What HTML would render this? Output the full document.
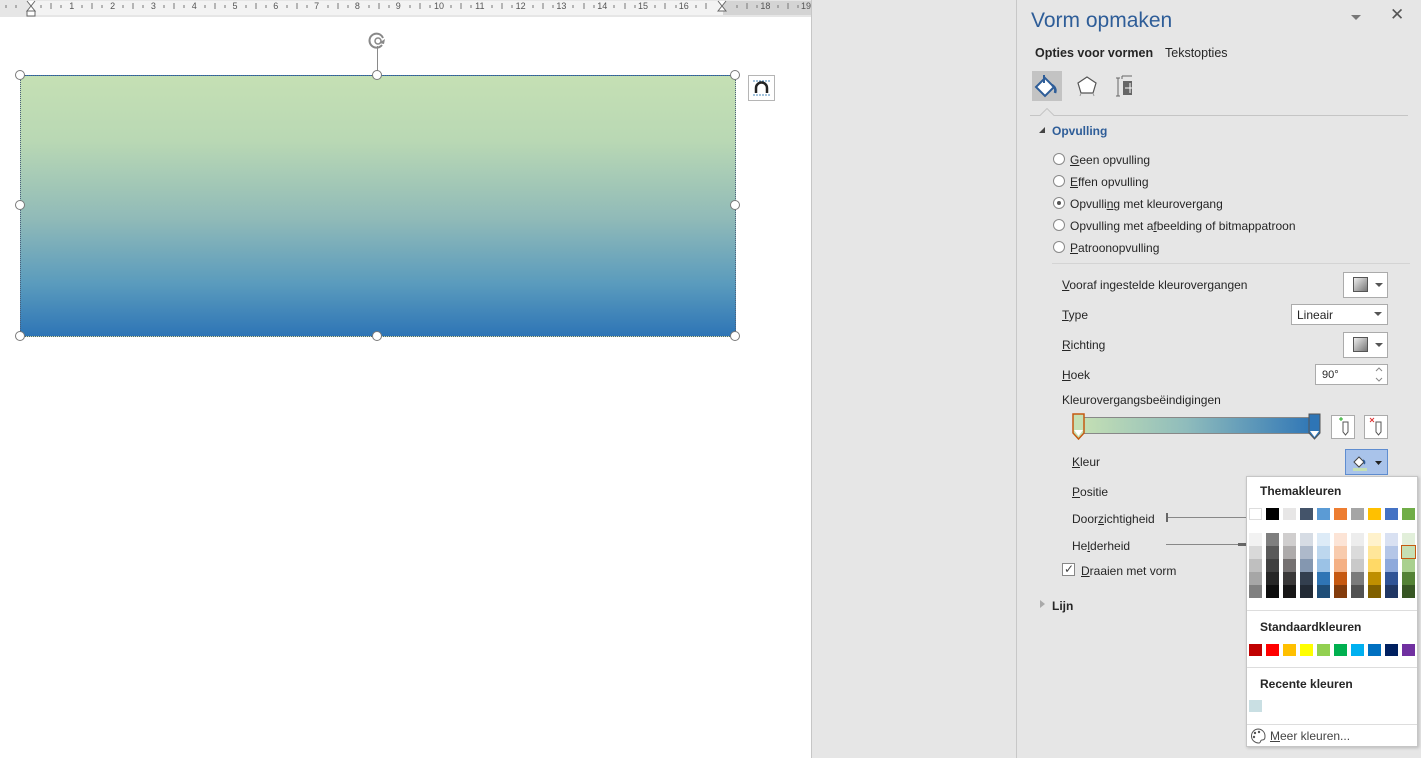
<!DOCTYPE html>
<html><head><meta charset="utf-8"><style>
*{margin:0;padding:0;box-sizing:border-box}
body{width:1421px;height:758px;overflow:hidden;background:#e6e6e6;font-family:"Liberation Sans",sans-serif;font-size:12px;color:#262626;position:relative}
.a{position:absolute}
.t{position:absolute;white-space:nowrap;line-height:14px}
u{text-decoration:underline}
.h{position:absolute;width:10px;height:10px;border:1px solid #7a7a7a;border-radius:50%;background:#fff}
.rad{position:absolute;width:12px;height:12px;border:1px solid #8a8a8a;border-radius:50%;background:#fff}
.btn{position:absolute;background:#fff;border:1px solid #ababab}
.arr{position:absolute;width:0;height:0;border-left:4px solid transparent;border-right:4px solid transparent;border-top:4px solid #555}
.sw{position:absolute;width:13px;height:12px}
.col{position:absolute;width:13px;top:533px}
.col div{height:13px}
.b{font-weight:bold}
</style></head><body>
<div class="a" style="left:0;top:0;width:811px;height:758px;background:#fff"></div>
<div class="a" style="left:811px;top:0;width:1px;height:758px;background:#c6c6c6"></div>
<div class="a" style="left:1016px;top:0;width:1px;height:758px;background:#c8c8c8"></div>
<div class="a" style="left:0;top:0;width:811px;height:17px;background:#e6e6e6"></div>
<div class="a" style="left:31px;top:1px;width:692px;height:14px;background:#f3f3f3"></div>
<div class="a" style="left:723px;top:1px;width:88px;height:14px;background:#d4d4d4"></div>
<svg class="a" style="left:0;top:0" width="811" height="18">
<g fill="#555" font-family="Liberation Sans" font-size="9" text-anchor="middle">
<text x="71.8" y="9">1</text><text x="112.6" y="9">2</text><text x="153.4" y="9">3</text><text x="194.2" y="9">4</text><text x="235" y="9">5</text><text x="275.8" y="9">6</text><text x="316.6" y="9">7</text><text x="357.4" y="9">8</text><text x="398.2" y="9">9</text><text x="439" y="9">10</text><text x="479.8" y="9">11</text><text x="520.6" y="9">12</text><text x="561.4" y="9">13</text><text x="602.2" y="9">14</text><text x="643" y="9">15</text><text x="683.8" y="9">16</text><text x="765.4" y="9">18</text><text x="806" y="9">19</text>
</g>
<g stroke="#777" stroke-width="1">
<path d="M6 5v3M16 5v3M51 3v6M41 5v3M61 5v3M82 5v3M92 3v6M102 5v3M123 5v3M133 3v6M143 5v3M164 5v3M174 3v6M184 5v3M205 5v3M215 3v6M225 5v3M246 5v3M256 3v6M266 5v3M287 5v3M297 3v6M307 5v3M328 5v3M338 3v6M348 5v3M369 5v3M379 3v6M389 5v3M410 5v3M420 3v6M430 5v3M451 5v3M461 3v6M471 5v3M492 5v3M502 3v6M512 5v3M533 5v3M543 3v6M553 5v3M573 5v3M584 3v6M594 5v3M614 5v3M625 3v6M635 5v3M655 5v3M665 3v6M676 5v3M696 5v3M706 3v6M737 5v3M747 3v6M757 5v3M778 5v3M788 3v6M798 5v3"/>
</g>
<path d="M27 1l4 5 4-5M27 11l4-5 4 5z" fill="#fff" stroke="#666"/>
<rect x="27" y="11" width="8" height="5" fill="#fff" stroke="#666"/>
<path d="M718 1l4 5 4-5M718 11l4-5 4 5z" fill="#fff" stroke="#666"/>
</svg>
<div class="a" style="left:20px;top:75px;width:716px;height:262px;border:1px dotted #4a5f7a;background:linear-gradient(to bottom,#c5e0b4 0%,#b9d8b4 25%,#90bab8 55%,#5a9bbd 80%,#2e75b6 100%)"></div>
<div class="a" style="left:377px;top:46px;width:1px;height:29px;background:#8a8a8a"></div>
<svg class="a" style="left:367px;top:30px" width="22" height="22"><path d="M16 8A7 7 0 1 0 15 15" fill="none" stroke="#888" stroke-width="2"/><circle cx="11" cy="11" r="3" fill="none" stroke="#888" stroke-width="1.5"/><path d="M12 13l5 1 1-5z" fill="#888"/></svg>
<div class="h" style="left:15px;top:70px"></div><div class="h" style="left:372px;top:70px"></div><div class="h" style="left:730px;top:70px"></div>
<div class="h" style="left:15px;top:200px"></div><div class="h" style="left:730px;top:200px"></div>
<div class="h" style="left:15px;top:331px"></div><div class="h" style="left:372px;top:331px"></div><div class="h" style="left:730px;top:331px"></div>
<div class="a" style="left:748px;top:75px;width:27px;height:26px;border:1px solid #b5b5b5;background:#fff"></div>
<svg class="a" style="left:748px;top:75px" width="27" height="26"><path d="M5 6h17M5 20h17" stroke="#4a87b8" stroke-width="1" stroke-dasharray="2 1"/><path d="M8 18v-5a5 5 0 0 1 11 0v5" fill="none" stroke="#222" stroke-width="2.5"/></svg>
<div class="t" style="left:1031px;top:9px;font-size:21px;line-height:24px;color:#2e5d98">Vorm opmaken</div>
<div class="a" style="left:1351px;top:15px;border-left:5px solid transparent;border-right:5px solid transparent;border-top:5px solid #777"></div>
<div class="t" style="left:1390px;top:8px;font-size:17px;color:#555">✕</div>
<div class="t b" style="left:1035px;top:46px;font-size:12.5px">Opties voor vormen</div>
<div class="t" style="left:1165px;top:46px;font-size:12.5px">Tekstopties</div>
<div class="a" style="left:1032px;top:71px;width:30px;height:30px;background:#c3c3c3"></div>
<svg class="a" style="left:1032px;top:71px" width="100" height="32">
<path d="M4 16l9-9 9 9-9 9z" fill="#fff" stroke="#2e5d98" stroke-width="2"/><path d="M12 4v8" stroke="#2e5d98" stroke-width="2"/><path d="M20 14c3 2 4 5 3 8" fill="none" stroke="#2e5d98" stroke-width="2.5"/>
<path d="M55 6l9 6-3 10h-12l-3-10z" fill="#fff" stroke="#555" stroke-width="1.2"/><path d="M49 22l-1 3M61 22l1 3" stroke="#999"/>
<path d="M86 7v18M84 7h4M84 25h4M90 5h16M90 5v3M106 5v3" stroke="#666"/><rect x="91" y="10" width="14" height="14" fill="#666"/><path d="M98 12v10M93 17h10" stroke="#fff"/>
</svg>
<svg class="a" style="left:1030px;top:108px" width="380" height="10"><path d="M0 7.5h10l7-7 7 7h354" fill="none" stroke="#c5c5c5"/></svg>
<div class="a" style="left:1039px;top:127px;border-left:6px solid transparent;border-bottom:6px solid #444"></div>
<div class="t b" style="left:1052px;top:124px;color:#2e5d98">Opvulling</div>
<div class="rad" style="left:1053px;top:153px"></div><div class="t" style="left:1070px;top:153px"><u>G</u>een opvulling</div>
<div class="rad" style="left:1053px;top:175px"></div><div class="t" style="left:1070px;top:175px"><u>E</u>ffen opvulling</div>
<div class="rad" style="left:1053px;top:197px"></div><div class="a" style="left:1057px;top:201px;width:4px;height:4px;border-radius:50%;background:#555"></div><div class="t" style="left:1070px;top:197px">Opvulli<u>n</u>g met kleurovergang</div>
<div class="rad" style="left:1053px;top:219px"></div><div class="t" style="left:1070px;top:219px">Opvulling met a<u>f</u>beelding of bitmappatroon</div>
<div class="rad" style="left:1053px;top:241px"></div><div class="t" style="left:1070px;top:241px"><u>P</u>atroonopvulling</div>
<div class="a" style="left:1052px;top:263px;width:358px;height:1px;background:#d4d4d4"></div>
<div class="t" style="left:1062px;top:278px"><u>V</u>ooraf ingestelde kleurovergangen</div>
<div class="btn" style="left:1343px;top:272px;width:45px;height:26px"></div><div class="a" style="left:1353px;top:277px;width:15px;height:15px;border:1px solid #555;background:linear-gradient(135deg,#eee,#777)"></div><div class="arr" style="left:1375px;top:283px"></div>
<div class="t" style="left:1062px;top:308px"><u>T</u>ype</div>
<div class="btn" style="left:1291px;top:304px;width:97px;height:21px"></div><div class="t" style="left:1297px;top:308px">Lineair</div><div class="arr" style="left:1374px;top:312px"></div>
<div class="t" style="left:1062px;top:338px"><u>R</u>ichting</div>
<div class="btn" style="left:1343px;top:332px;width:45px;height:26px"></div><div class="a" style="left:1353px;top:337px;width:15px;height:15px;border:1px solid #555;background:linear-gradient(135deg,#eee,#777)"></div><div class="arr" style="left:1375px;top:343px"></div>
<div class="t" style="left:1062px;top:368px"><u>H</u>oek</div>
<div class="btn" style="left:1315px;top:364px;width:73px;height:21px"></div><div class="t" style="left:1322px;top:368px;font-size:11px">90°</div>
<svg class="a" style="left:1374px;top:365px" width="10" height="19"><path d="M2 6l3-3 3 3M2 13l3 3 3-3" fill="none" stroke="#888"/></svg>
<div class="t" style="left:1062px;top:393px">Kleurovergangsbeëindigingen</div>
<div class="a" style="left:1080px;top:417px;width:236px;height:17px;border:1px solid #888;background:linear-gradient(to right,#c5e0b4,#8fbcbc 45%,#2e75b6)"></div>
<svg class="a" style="left:1070px;top:412px" width="260" height="32"><path d="M3 2h11v19l-5.5 6-5.5-6z" fill="#c5e0b4" stroke="#c55a11" stroke-width="1.5"/><path d="M4 18l4.5 6 4.5-6" fill="#fff"/><path d="M239 2h11v19l-5.5 6-5.5-6z" fill="#2e75b6" stroke="#555"/><path d="M240 19l4.5 6 4.5-6" fill="#fff"/></svg>
<div class="btn" style="left:1331px;top:415px;width:24px;height:24px"></div><div class="btn" style="left:1364px;top:415px;width:24px;height:24px"></div>
<svg class="a" style="left:1331px;top:415px" width="57" height="24"><path d="M8 4h4M10 2v4" stroke="#2a2"/><path d="M12 7h5v10l-2.5 3-2.5-3z" fill="#fff" stroke="#555"/><path d="M39 3l4 4M43 3l-4 4" stroke="#d33"/><path d="M45 7h5v10l-2.5 3-2.5-3z" fill="#fff" stroke="#555"/></svg>
<div class="t" style="left:1072px;top:455px"><u>K</u>leur</div>
<div class="a" style="left:1345px;top:449px;width:43px;height:26px;background:#a9c3ea;border:1px solid #5f8dd0"></div>
<svg class="a" style="left:1345px;top:449px" width="43" height="26"><path d="M9 13l5-5 5 5-5 5z" fill="#fff" stroke="#444"/><path d="M18 11c2 1 2 3 1 4" fill="none" stroke="#2e5d98" stroke-width="1.5"/><rect x="8" y="19" width="14" height="3" fill="#c5e0b4"/><path d="M30 12h7l-3.5 4z" fill="#222"/></svg>
<div class="t" style="left:1072px;top:485px"><u>P</u>ositie</div>
<div class="t" style="left:1072px;top:512px">Door<u>z</u>ichtigheid</div>
<div class="a" style="left:1166px;top:513px;width:2px;height:9px;background:#666"></div><div class="a" style="left:1168px;top:517px;width:80px;height:1px;background:#888"></div>
<div class="t" style="left:1072px;top:539px">He<u>l</u>derheid</div>
<div class="a" style="left:1166px;top:544px;width:80px;height:1px;background:#888"></div><div class="a" style="left:1238px;top:543px;width:8px;height:3px;background:#666"></div>
<div class="a" style="left:1062px;top:563px;width:13px;height:13px;border:1px solid #888;background:#fff"></div><div class="t" style="left:1064px;top:562px;font-size:12px;color:#444">✓</div>
<div class="t" style="left:1081px;top:564px"><u>D</u>raaien met vorm</div>
<div class="a" style="left:1040px;top:600px;border-top:4px solid transparent;border-bottom:4px solid transparent;border-left:5px solid #aaa"></div>
<div class="t b" style="left:1052px;top:599px">Lijn</div>
<div class="a" style="left:1246px;top:476px;width:172px;height:271px;background:#fff;border:1px solid #c6c6c6;box-shadow:1px 1px 3px rgba(0,0,0,.2)"></div>
<div class="t b" style="left:1260px;top:484px">Themakleuren</div>
<div class="sw" style="left:1249px;top:508px;border:1px solid #ddd;background:#fff"></div>
<div class="sw" style="left:1266px;top:508px;background:#000"></div>
<div class="sw" style="left:1283px;top:508px;background:#e7e6e6"></div>
<div class="sw" style="left:1300px;top:508px;background:#44546a"></div>
<div class="sw" style="left:1317px;top:508px;background:#5b9bd5"></div>
<div class="sw" style="left:1334px;top:508px;background:#ed7d31"></div>
<div class="sw" style="left:1351px;top:508px;background:#a5a5a5"></div>
<div class="sw" style="left:1368px;top:508px;background:#ffc000"></div>
<div class="sw" style="left:1385px;top:508px;background:#4472c4"></div>
<div class="sw" style="left:1402px;top:508px;background:#70ad47"></div>
<div class="col" style="left:1249px"><div style="background:#f2f2f2"></div><div style="background:#d9d9d9"></div><div style="background:#bfbfbf"></div><div style="background:#a6a6a6"></div><div style="background:#808080"></div></div>
<div class="col" style="left:1266px"><div style="background:#7f7f7f"></div><div style="background:#595959"></div><div style="background:#404040"></div><div style="background:#262626"></div><div style="background:#0d0d0d"></div></div>
<div class="col" style="left:1283px"><div style="background:#d0cece"></div><div style="background:#aeabab"></div><div style="background:#757171"></div><div style="background:#3a3838"></div><div style="background:#171616"></div></div>
<div class="col" style="left:1300px"><div style="background:#d6dce4"></div><div style="background:#adb9ca"></div><div style="background:#8497b0"></div><div style="background:#333f4f"></div><div style="background:#222a35"></div></div>
<div class="col" style="left:1317px"><div style="background:#ddebf7"></div><div style="background:#bdd7ee"></div><div style="background:#9bc2e6"></div><div style="background:#2f75b5"></div><div style="background:#1f4e78"></div></div>
<div class="col" style="left:1334px"><div style="background:#fce4d6"></div><div style="background:#f8cbad"></div><div style="background:#f4b084"></div><div style="background:#c65911"></div><div style="background:#833c0c"></div></div>
<div class="col" style="left:1351px"><div style="background:#ededed"></div><div style="background:#dbdbdb"></div><div style="background:#c9c9c9"></div><div style="background:#7b7b7b"></div><div style="background:#525252"></div></div>
<div class="col" style="left:1368px"><div style="background:#fff2cc"></div><div style="background:#ffe699"></div><div style="background:#ffd966"></div><div style="background:#bf8f00"></div><div style="background:#806000"></div></div>
<div class="col" style="left:1385px"><div style="background:#d9e1f2"></div><div style="background:#b4c6e7"></div><div style="background:#8ea9db"></div><div style="background:#305496"></div><div style="background:#203764"></div></div>
<div class="col" style="left:1402px"><div style="background:#e2efda"></div><div style="background:#c6e0b4"></div><div style="background:#a9d08e"></div><div style="background:#548235"></div><div style="background:#375623"></div></div>
<div class="a" style="left:1401px;top:545px;width:15px;height:14px;border:1.5px solid #c55a11"></div>
<div class="a" style="left:1247px;top:610px;width:170px;height:1px;background:#ddd"></div>
<div class="t b" style="left:1260px;top:620px">Standaardkleuren</div>
<div class="sw" style="left:1249px;top:644px;background:#c00000"></div>
<div class="sw" style="left:1266px;top:644px;background:#ff0000"></div>
<div class="sw" style="left:1283px;top:644px;background:#ffc000"></div>
<div class="sw" style="left:1300px;top:644px;background:#ffff00"></div>
<div class="sw" style="left:1317px;top:644px;background:#92d050"></div>
<div class="sw" style="left:1334px;top:644px;background:#00b050"></div>
<div class="sw" style="left:1351px;top:644px;background:#00b0f0"></div>
<div class="sw" style="left:1368px;top:644px;background:#0070c0"></div>
<div class="sw" style="left:1385px;top:644px;background:#002060"></div>
<div class="sw" style="left:1402px;top:644px;background:#7030a0"></div>
<div class="a" style="left:1247px;top:667px;width:170px;height:1px;background:#ddd"></div>
<div class="t b" style="left:1260px;top:677px">Recente kleuren</div>
<div class="sw" style="left:1249px;top:700px;background:#c9dfe3"></div>
<div class="a" style="left:1247px;top:724px;width:170px;height:1px;background:#ddd"></div>
<svg class="a" style="left:1249px;top:727px" width="18" height="18"><path d="M9 2a7 7 0 1 0 1 14c2 0 1-3 3-3 3 0 3-2 3-4A7 7 0 0 0 9 2z" fill="none" stroke="#555"/><circle cx="6" cy="6" r="1.2" fill="#555"/><circle cx="10" cy="5" r="1.2" fill="#555"/><circle cx="5" cy="10" r="1.2" fill="#555"/></svg>
<div class="t" style="left:1270px;top:729px;color:#444"><u>M</u>eer kleuren...</div>
</body></html>
